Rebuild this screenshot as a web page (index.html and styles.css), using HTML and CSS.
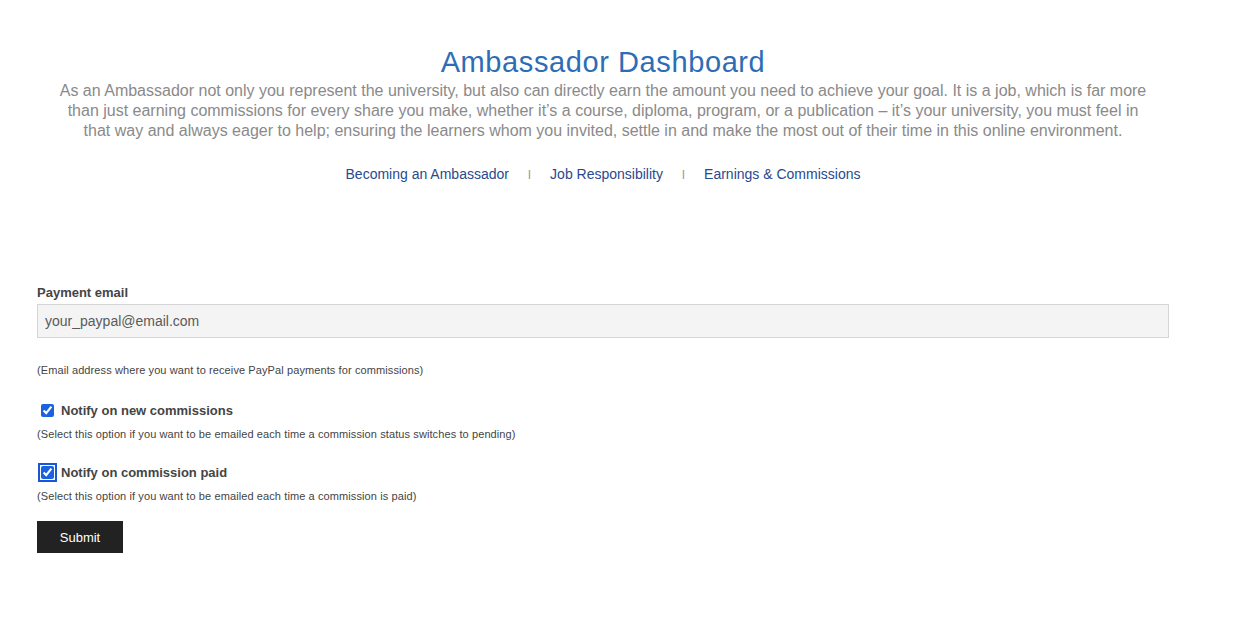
FILE: index.html
```html
<!DOCTYPE html>
<html lang="en">

<head>
    <meta charset="UTF-8">
    <meta name="viewport" content="width=device-width, initial-scale=1.0">
    <title>Ambassador Dashboard</title>
    <link rel="stylesheet" href="styles.css">
</head>

<body>
    <div class="page">
        <div class="intro">
            <h1>Ambassador Dashboard</h1>
            <p>As an Ambassador not only you represent the university, but also can directly earn the amount you need to achieve your goal. It is a job, which is far more than just earning commissions for every share you make, whether it’s a course, diploma, program, or a publication – it’s your university, you must feel in that way and always eager to help; ensuring the learners whom you invited, settle in and make the most out of their time in this online environment.</p>
            <div class="links">
                <a href="#">Becoming an Ambassador</a>
                <span class="sep">I</span>
                <a href="#">Job Responsibility</a>
                <span class="sep">I</span>
                <a href="#">Earnings &amp; Commissions</a>
            </div>
        </div>

        <form class="settings" onsubmit="return false;">
            <label class="field-label" for="payment-email">Payment email</label>
            <input type="text" id="payment-email" class="text-input" placeholder="your_paypal@email.com">
            <p class="help help-email">(Email address where you want to receive PayPal payments for commissions)</p>

            <div class="check-row">
                <input type="checkbox" id="notify-new" checked>
                <label for="notify-new">Notify on new commissions</label>
            </div>
            <p class="help">(Select this option if you want to be emailed each time a commission status switches to pending)</p>

            <div class="check-row">
                <input type="checkbox" id="notify-paid" class="focused" checked>
                <label for="notify-paid">Notify on commission paid</label>
            </div>
            <p class="help">(Select this option if you want to be emailed each time a commission is paid)</p>

            <button type="submit" class="submit-btn">Submit</button>
        </form>
    </div>
</body>

</html>
```

FILE: styles.css
```css
body {
    font-family: 'Liberation Sans', Arial, sans-serif;
    margin: 0;
    padding: 0;
    background-color: #fff;
    color: #444;
}

.page {
    width: 1132px;
    margin-left: 37px;
    padding-top: 44px;
}

.intro {
    text-align: center;
}

.intro h1 {
    margin: 0;
    font-size: 29px;
    font-weight: normal;
    letter-spacing: 0.6px;
    color: #2d6db6;
    line-height: 37px;
}

.intro p {
    margin: 0 auto;
    width: 1100px;
    font-size: 16px;
    line-height: 20px;
    color: #8a8a8a;
}

.links {
    margin-top: 23px;
    font-size: 14px;
    line-height: 20px;
}

.links a {
    color: #284a8e;
    text-decoration: none;
}

.links .sep {
    color: #999;
    font-size: 12px;
    margin: 0 15px;
}

.settings {
    margin-top: 100px;
    display: flex;
    flex-direction: column;
    align-items: flex-start;
}

.field-label {
    font-size: 13px;
    font-weight: bold;
    color: #444;
    line-height: 16px;
    margin-bottom: 3px;
}

.text-input {
    box-sizing: border-box;
    width: 1132px;
    height: 34px;
    padding: 0 7px;
    border: 1px solid #d5d5d5;
    background-color: #f4f4f4;
    font-family: inherit;
    font-size: 14px;
    color: #555;
}

.text-input::placeholder {
    color: #5a5a5a;
}

.help {
    margin: 0;
    font-size: 11px;
    letter-spacing: 0.1px;
    line-height: 14px;
    color: #444;
}

.help-email {
    margin-top: 25px;
    margin-bottom: 2px;
}

.check-row {
    display: flex;
    align-items: center;
    height: 20px;
    margin-bottom: 7px;
}

.check-row input {
    width: 13px;
    height: 13px;
    margin: 0 7px 0 4px;
    accent-color: #1a62e0;
}

.check-row input.focused {
    outline: 2px solid #1a56d6;
    outline-offset: 1px;
    border-radius: 2px;
}

.check-row label {
    font-size: 13px;
    font-weight: bold;
    color: #444;
}

.help + .check-row {
    margin-top: 21px;
}

.submit-btn {
    margin-top: 18px;
    width: 86px;
    height: 32px;
    border: none;
    background-color: #222;
    color: #fff;
    font-family: inherit;
    font-size: 13px;
    cursor: pointer;
}
```
